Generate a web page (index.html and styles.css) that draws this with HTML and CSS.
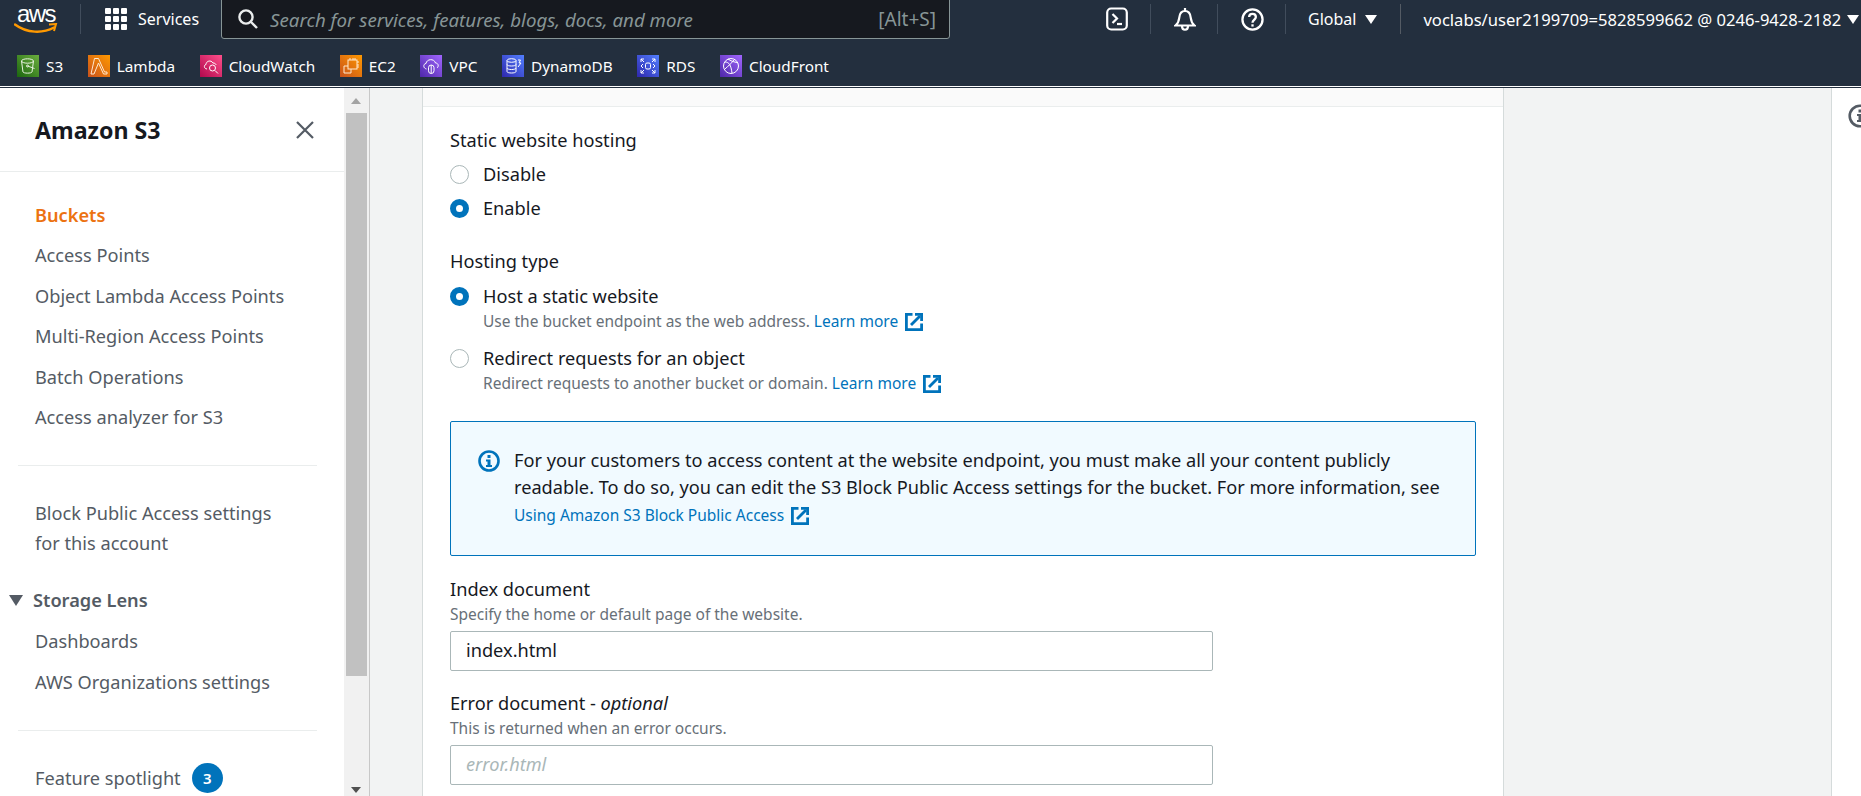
FILE: index.html
```html
<!DOCTYPE html>
<html>
<head>
  <title>Edit static website hosting - S3</title>
  <link rel="stylesheet" href="styles.css">
</head>
<body>
  <header class="topbar">
    <div class="toprow">
      <div class="aws-logo">
        <span class="aws-word">aws</span>
        <svg class="aws-smile" width="44" height="11" viewBox="0 0 44 11"><path d="M1 1.500c12 9 28 9 39 3" fill="none" stroke="#f90" stroke-width="2.4" stroke-linecap="round"/><path d="M35 1.500l7-.5-2 7" fill="none" stroke="#f90" stroke-width="2"/></svg>
      </div>
      <span class="top-div div-logo"></span>
      <svg class="grid-icon" width="22" height="22" viewBox="0 0 22 22" fill="#fff">
        <rect width="6" height="6" rx="1"/><rect x="8" width="6" height="6" rx="1"/><rect x="16" width="6" height="6" rx="1"/>
        <rect y="8" width="6" height="6" rx="1"/><rect x="8" y="8" width="6" height="6" rx="1"/><rect x="16" y="8" width="6" height="6" rx="1"/>
        <rect y="16" width="6" height="6" rx="1"/><rect x="8" y="16" width="6" height="6" rx="1"/><rect x="16" y="16" width="6" height="6" rx="1"/>
      </svg>
      <span class="services">Services</span>
      <div class="searchbox">
        <svg width="20" height="20" viewBox="0 0 20 20" fill="none" stroke="#eaeded" stroke-width="2.4"><circle cx="8" cy="8" r="6.6"/><path d="M13 13l6 6"/></svg>
        <span class="search-text">Search for services, features, blogs, docs, and more</span>
        <span class="search-key">[Alt+S]</span>
      </div>
      <svg class="icon-term" width="22" height="24" viewBox="0 0 22 24" fill="none" stroke="#fff" stroke-width="2.2"><rect x="1.2" y="1.5" width="19.6" height="21" rx="4"/><path d="M6.500 7l4.500 4.500-4.500 4.500" /><path d="M11 17h5"/></svg>
      <span class="top-div div-term"></span>
      <svg class="icon-bell" width="22" height="24" viewBox="0 0 22 24" fill="none" stroke="#fff" stroke-width="2.2"><path d="M1.500 18.500c3-2.500 3.500-5 3.800-8C5.700 6.500 8 4 11 4s5.300 2.500 5.700 6.500c.3 3 .8 5.500 3.800 8z"/><path d="M11 1v3"/><path d="M8 19c0 5 6 5 6 0"/></svg>
      <span class="top-div div-bell"></span>
      <svg class="icon-help" width="23" height="23" viewBox="0 0 24 24" fill="none" stroke="#fff" stroke-width="2.4"><circle cx="12" cy="12" r="10.500"/><path d="M8.500 9.500c0-4.500 7-4.500 7 0 0 3-3.500 2.500-3.500 6"/><path d="M12 17v2.400"/></svg>
      <span class="top-div div-help"></span>
      <span class="region">Global</span>
      <span class="caret caret-region"></span>
      <span class="top-div div-region"></span>
      <span class="account">voclabs/user2199709=5828599662 @ 0246-9428-2182</span>
      <span class="caret caret-account"></span>
    </div>
    <div class="favs">
      <div class="fav">
        <svg class="svc s3" viewBox="0 0 22 22" fill="none" stroke="#e8f2e0" stroke-width="1"><ellipse cx="10.500" cy="6" rx="6" ry="2.200"/><path d="M4.500 6l1.500 11c.5 1.500 8.500 1.500 9 0L16.500 6"/><path d="M10.500 11l7 2.500"/><circle cx="10.500" cy="11" r="1"/></svg>
        <span>S3</span>
      </div>
      <div class="fav">
        <svg class="svc lambda" viewBox="0 0 22 22" fill="none" stroke="#ffe9d0" stroke-width="1"><path d="M6.500 3.500h4L16.500 17H19v2h-3.500L10.500 8 6 19H3z"/></svg>
        <span>Lambda</span>
      </div>
      <div class="fav">
        <svg class="svc cw" viewBox="0 0 22 22" fill="none" stroke="#fff" stroke-width="1"><path d="M7 14c-3 0-3.500-4-1-4.500C6 6 11 4.500 13 8c2 0 3 1 3 2"/><circle cx="12.500" cy="13" r="3"/><path d="M15 15.500l3 3"/></svg>
        <span>CloudWatch</span>
      </div>
      <div class="fav">
        <svg class="svc ec2" viewBox="0 0 22 22" fill="none" stroke="#ffe9d0" stroke-width="1"><rect x="8" y="5" width="9" height="9"/><path d="M8 11H4v7h7v-4"/><path d="M10 3v2M13 3v2M15 3v2M17 7h2M17 10h2M17 12h2"/></svg>
        <span>EC2</span>
      </div>
      <div class="fav">
        <svg class="svc vpc" viewBox="0 0 22 22" fill="none" stroke="#fff" stroke-width="1"><path d="M6.500 14c-4-1-3-5.500-.5-5.500.5-4.500 8-5.500 9.500-.5 3 0 3.500 3.500 1.500 5"/><rect x="8.500" y="10" width="5.500" height="8.500" rx="2.700"/><path d="M11.200 10v8.500"/></svg>
        <span>VPC</span>
      </div>
      <div class="fav">
        <svg class="svc dynamo" viewBox="0 0 22 22" fill="none" stroke="#fff" stroke-width="1"><ellipse cx="9.500" cy="5.500" rx="4.500" ry="1.800"/><path d="M5 5.500v11c0 2 9 2 9 0v-11M5 9.500c0 2 9 2 9 0M5 13c0 2 9 2 9 0"/><path d="M16 5l2.500 0-1.500 3h2l-3 4"/></svg>
        <span>DynamoDB</span>
      </div>
      <div class="fav">
        <svg class="svc rds" viewBox="0 0 22 22" fill="none" stroke="#fff" stroke-width="1"><rect x="8.500" y="8" width="5" height="6" rx="1.500"/><path d="M4 4l3 3M4 7V4h3M18 4l-3 3M18 7V4h-3M4 18l3-3M4 15v3h3M18 18l-3-3M18 15v3h-3M6 9l-2 2 2 2M16 9l2 2-2 2"/></svg>
        <span>RDS</span>
      </div>
      <div class="fav">
        <svg class="svc cf" viewBox="0 0 22 22" fill="none" stroke="#fff" stroke-width="1"><circle cx="11" cy="11" r="7.500"/><path d="M5 7c4 0 6 3 7 11M8 4c4 3 8 3 10 4M5 14c3-3 6-5 9-9"/></svg>
        <span>CloudFront</span>
      </div>
    </div>
  </header>

  <div class="layout">
    <aside class="sidenav">
      <div class="sidenav-head">
        <h2>Amazon S3</h2>
        <svg width="18" height="18" viewBox="0 0 18 18" fill="none" stroke="#545b64" stroke-width="2.200"><path d="M1 1l16 16M17 1L1 17"/></svg>
      </div>
      <ul class="navlist first">
        <li class="active">Buckets</li>
        <li>Access Points</li>
        <li>Object Lambda Access Points</li>
        <li>Multi-Region Access Points</li>
        <li>Batch Operations</li>
        <li>Access analyzer for S3</li>
      </ul>
      <div class="nav-div"></div>
      <p class="nav-block">Block Public Access settings<br>for this account</p>
      <div class="lens-head"><span class="lens-caret"></span>Storage Lens</div>
      <ul class="navlist">
        <li>Dashboards</li>
        <li>AWS Organizations settings</li>
      </ul>
      <div class="nav-div"></div>
      <div class="spotlight">Feature spotlight <span class="badge">3</span></div>
    </aside>

    <div class="scrollbar">
      <span class="arrow-up"></span>
      <div class="thumb"></div>
      <span class="arrow-down"></span>
    </div>

    <main class="content">
      <section class="card">
        <div class="card-band"></div>
        <div class="card-body">
          <div class="label">Static website hosting</div>
          <div class="radio-row first-radio"><span class="radio"></span>Disable</div>
          <div class="radio-row"><span class="radio on"></span>Enable</div>

          <div class="label type-label">Hosting type</div>
          <div class="option">
            <span class="radio on"></span>
            <div>
              <div class="opt-title">Host a static website</div>
              <div class="hint">Use the bucket endpoint as the web address. <a class="link">Learn more</a>
                <svg class="ext" viewBox="0 0 20 20" fill="none" stroke="#0073bb" stroke-width="2.800"><path d="M8.500 2.400H2.400v15.200h15.200V11.500"/><path d="M7 13l9-9"/><path d="M11 2.400h6.600V9" /></svg>
              </div>
            </div>
          </div>
          <div class="option">
            <span class="radio"></span>
            <div>
              <div class="opt-title">Redirect requests for an object</div>
              <div class="hint">Redirect requests to another bucket or domain. <a class="link">Learn more</a>
                <svg class="ext" viewBox="0 0 20 20" fill="none" stroke="#0073bb" stroke-width="2.800"><path d="M8.500 2.400H2.400v15.200h15.200V11.500"/><path d="M7 13l9-9"/><path d="M11 2.400h6.600V9" /></svg>
              </div>
            </div>
          </div>

          <div class="infobox">
            <svg class="info-icon" width="22" height="22" viewBox="0 0 22 22"><circle cx="11" cy="11" r="9.500" fill="none" stroke="#0073bb" stroke-width="2.600"/><rect x="9.500" y="5" width="3" height="3" fill="#0073bb"/><path d="M8 9.500h4.500V15H14v2H8v-2h1.500v-3.500H8z" fill="#0073bb"/></svg>
            <div class="info-text">
              For your customers to access content at the website endpoint, you must make all your content publicly readable. To do so, you can edit the S3 Block Public Access settings for the bucket. For more information, see
              <div class="info-link"><a class="link">Using Amazon S3 Block Public Access</a>
                <svg class="ext" viewBox="0 0 20 20" fill="none" stroke="#0073bb" stroke-width="2.800"><path d="M8.500 2.400H2.400v15.200h15.200V11.500"/><path d="M7 13l9-9"/><path d="M11 2.400h6.600V9" /></svg>
              </div>
            </div>
          </div>

          <div class="label index-label">Index document</div>
          <div class="hint field-hint">Specify the home or default page of the website.</div>
          <input class="field" type="text" value="index.html">

          <div class="label error-label">Error document - <em>optional</em></div>
          <div class="hint field-hint">This is returned when an error occurs.</div>
          <input class="field" type="text" placeholder="error.html">
        </div>
      </section>
    </main>

    <aside class="toolrail">
      <svg width="24" height="24" viewBox="0 0 24 24"><circle cx="12" cy="12" r="10.300" fill="none" stroke="#545b64" stroke-width="2.600"/><rect x="10.500" y="5.500" width="3" height="3" fill="#545b64"/><path d="M9 10h4.500v6H15v2H9v-2h1.500v-4H9z" fill="#545b64"/></svg>
    </aside>
  </div>
</body>
</html>
```

FILE: styles.css
```css
* {
  box-sizing: border-box;
}

html, body {
  margin: 0;
  height: 100%;
  overflow: hidden;
}

body {
  font-family: "Noto Sans", Arial, sans-serif;
  font-size: 18.2px;
  color: #16191f;
  background-color: #fff;
  display: flex;
  flex-direction: column;
}

/* top navigation */
.topbar {
  height: 88px;
  flex: none;
  background-color: #232f3e;
  color: #fff;
  border-bottom: 1px solid #232f3e;
  box-shadow: inset 0 -1px 0 #fff;
}

.toprow {
  height: 38px;
  display: flex;
  align-items: center;
}

.aws-logo {
  width: 44px;
  height: 38px;
  margin-left: 14px;
  flex: none;
  display: flex;
  flex-direction: column;
  align-items: center;
}

.aws-word {
  font-family: "Liberation Sans", Arial, sans-serif;
  font-size: 24px;
  line-height: 28px;
  letter-spacing: -1.5px;
}

.aws-smile {
  flex: none;
  margin-top: -5px;
}

.top-div {
  width: 1px;
  height: 30px;
  background-color: #414d5c;
  flex: none;
}

.div-logo {
  margin-left: 22px;
}

.grid-icon {
  margin-left: 24px;
  flex: none;
}

.services {
  margin-left: 11px;
  width: 60px;
  font-size: 16px;
}

.searchbox {
  width: 729px;
  height: 40px;
  margin-left: 23px;
  padding: 0 13px 0 16px;
  flex: none;
  display: flex;
  align-items: center;
  background-color: #16191f;
  border: 1px solid #879596;
  border-radius: 0 0 3px 3px;
}

.search-text {
  margin-left: 12px;
  font-style: italic;
  font-size: 18.7px;
  color: #879596;
  flex: 1;
}

.search-key {
  font-size: 19px;
  color: #879596;
}

.icon-term {
  margin-left: 156px;
  flex: none;
}

.div-term {
  margin-left: 22px;
}

.icon-bell {
  margin-left: 23px;
  flex: none;
}

.div-bell {
  margin-left: 21px;
}

.icon-help {
  margin-left: 23px;
  flex: none;
}

.div-help {
  margin-left: 21px;
}

.region {
  margin-left: 22px;
  font-size: 16px;
}

.caret {
  width: 0;
  height: 0;
  flex: none;
  border-left: 6px solid transparent;
  border-right: 6px solid transparent;
  border-top: 9px solid #fff;
}

.caret-region {
  margin-left: 9px;
}

.div-region {
  margin-left: 23px;
  background-color: #545b64;
}

.account {
  margin-left: 22px;
  font-size: 16.6px;
  white-space: nowrap;
}

.caret-account {
  margin-left: 6px;
}

/* favorites bar */
.favs {
  height: 48px;
  padding: 8px 0 0 17px;
  display: flex;
  align-items: center;
  gap: 24.6px;
}

.fav {
  display: flex;
  align-items: center;
  gap: 7px;
  font-size: 15.3px;
}

.svc {
  width: 22px;
  height: 22px;
  flex: none;
}

.s3 { background: linear-gradient(45deg, #1b660f, #6cae3e); }
.lambda { background: linear-gradient(45deg, #c8511b, #f90); }
.cw { background: linear-gradient(45deg, #b0084d, #ff4f8b); }
.ec2 { background: linear-gradient(45deg, #c8511b, #f90); }
.vpc { background: linear-gradient(45deg, #4d27a8, #a166ff); }
.dynamo { background: linear-gradient(45deg, #2e27ad, #527fff); }
.rds { background: linear-gradient(45deg, #2e27ad, #527fff); }
.cf { background: linear-gradient(45deg, #4d27a8, #a166ff); }

/* page layout */
.layout {
  flex: 1;
  min-height: 0;
  display: flex;
  overflow: hidden;
}

.sidenav {
  width: 344px;
  flex: none;
  overflow: hidden;
  color: #545b64;
}

.sidenav-head {
  height: 84px;
  padding: 0 30px 0 35px;
  display: flex;
  align-items: center;
  justify-content: space-between;
  border-bottom: 1px solid #eaeded;
}

.sidenav-head h2 {
  margin: 0;
  font-size: 23.2px;
  color: #16191f;
}

.navlist {
  list-style: none;
  margin: 0;
  padding: 0 0 0 35px;
}

.navlist.first {
  padding-top: 23px;
}

.navlist li {
  height: 40.4px;
  line-height: 40px;
  white-space: nowrap;
}

.navlist li.active {
  color: #ec7211;
  font-weight: 600;
}

.nav-div {
  height: 1px;
  margin: 28px 27px 0 18px;
  background-color: #eaeded;
}

.nav-block {
  margin: 32px 0 0 35px;
  line-height: 30px;
}

.lens-head {
  height: 40px;
  margin-top: 22px;
  padding-left: 9px;
  display: flex;
  align-items: center;
  gap: 10px;
  font-weight: 600;
}

.lens-caret {
  width: 0;
  height: 0;
  border-left: 7px solid transparent;
  border-right: 7px solid transparent;
  border-top: 11px solid #545b64;
}

.lens-head + .navlist {
  padding-top: 1px;
}

.spotlight {
  margin: 27px 0 0 35px;
  height: 40px;
  display: flex;
  align-items: center;
  gap: 11px;
}

.badge {
  width: 31px;
  height: 30px;
  border-radius: 50%;
  background-color: #0073bb;
  color: #fff;
  font-size: 15px;
  font-weight: 600;
  display: flex;
  align-items: center;
  justify-content: center;
}

.scrollbar {
  width: 26px;
  flex: none;
  position: relative;
  padding: 25px 2px 0;
  background-color: #f1f1f1;
  border-right: 1px solid #c8c8c8;
}

.thumb {
  width: 21px;
  height: 563px;
  background-color: #c1c1c1;
}

.arrow-up, .arrow-down {
  position: absolute;
  left: 7px;
  width: 0;
  height: 0;
  border-left: 5.5px solid transparent;
  border-right: 5.5px solid transparent;
}

.arrow-up {
  top: 10px;
  border-bottom: 6px solid #a3a3a3;
}

.arrow-down {
  bottom: 3px;
  border-top: 6px solid #505050;
}

/* main column */
.content {
  flex: 1;
  padding-left: 52px;
  background-color: #f2f3f3;
  overflow: hidden;
}

.card {
  width: 1082px;
  height: 100%;
  background-color: #fff;
  border-left: 1px solid #d5dbdb;
  border-right: 1px solid #d5dbdb;
}

.card-band {
  height: 19px;
  background-color: #fafafa;
  border-bottom: 1px solid #eaeded;
}

.card-body {
  padding: 21px 27px 0 27px;
}

.label {
  line-height: 24px;
}

.first-radio {
  margin-top: 5px;
}

.radio-row {
  height: 34px;
  display: flex;
  align-items: center;
  gap: 14px;
}

.radio {
  width: 19px;
  height: 19px;
  flex: none;
  border-radius: 50%;
  border: 1px solid #aab7b8;
  background-color: #fff;
}

.radio.on {
  border: 6px solid #0073bb;
}

.type-label {
  margin-top: 24px;
}

.option {
  margin-top: 11px;
  display: flex;
  gap: 14px;
}

.option .radio {
  margin-top: 3px;
}

.option + .option {
  margin-top: 14px;
}

.opt-title {
  line-height: 24px;
}

.hint {
  margin-top: 2px;
  font-size: 15.5px;
  line-height: 22px;
  color: #687078;
}

.link {
  color: #0073bb;
}

.ext {
  width: 20px;
  height: 20px;
  margin-left: 2px;
  vertical-align: -5px;
}

.infobox {
  margin-top: 27px;
  height: 135px;
  padding: 25px 20px 0 27px;
  display: flex;
  gap: 14px;
  background-color: #f1faff;
  border: 1px solid #0073bb;
  border-radius: 2px;
}

.info-icon {
  flex: none;
  margin-top: 3px;
}

.info-text {
  line-height: 27px;
}

.info-link {
  font-size: 15.5px;
  padding-top: 1px;
}

.index-label {
  margin-top: 21px;
}

.field-hint {
  margin-bottom: 6px;
}

.field {
  display: block;
  width: 763px;
  height: 40px;
  padding: 0 15px 2px;
  font-family: inherit;
  font-size: 18.2px;
  color: #16191f;
  background-color: #fff;
  border: 1px solid #aab7b8;
  border-radius: 2px;
}

.field::placeholder {
  color: #aab7b8;
  font-style: italic;
}

.error-label {
  margin-top: 20px;
}

.toolrail {
  width: 30px;
  flex: none;
  padding: 16px 0 0 16px;
  background-color: #fff;
  border-left: 1px solid #d5dbdb;
  overflow: hidden;
}
```
